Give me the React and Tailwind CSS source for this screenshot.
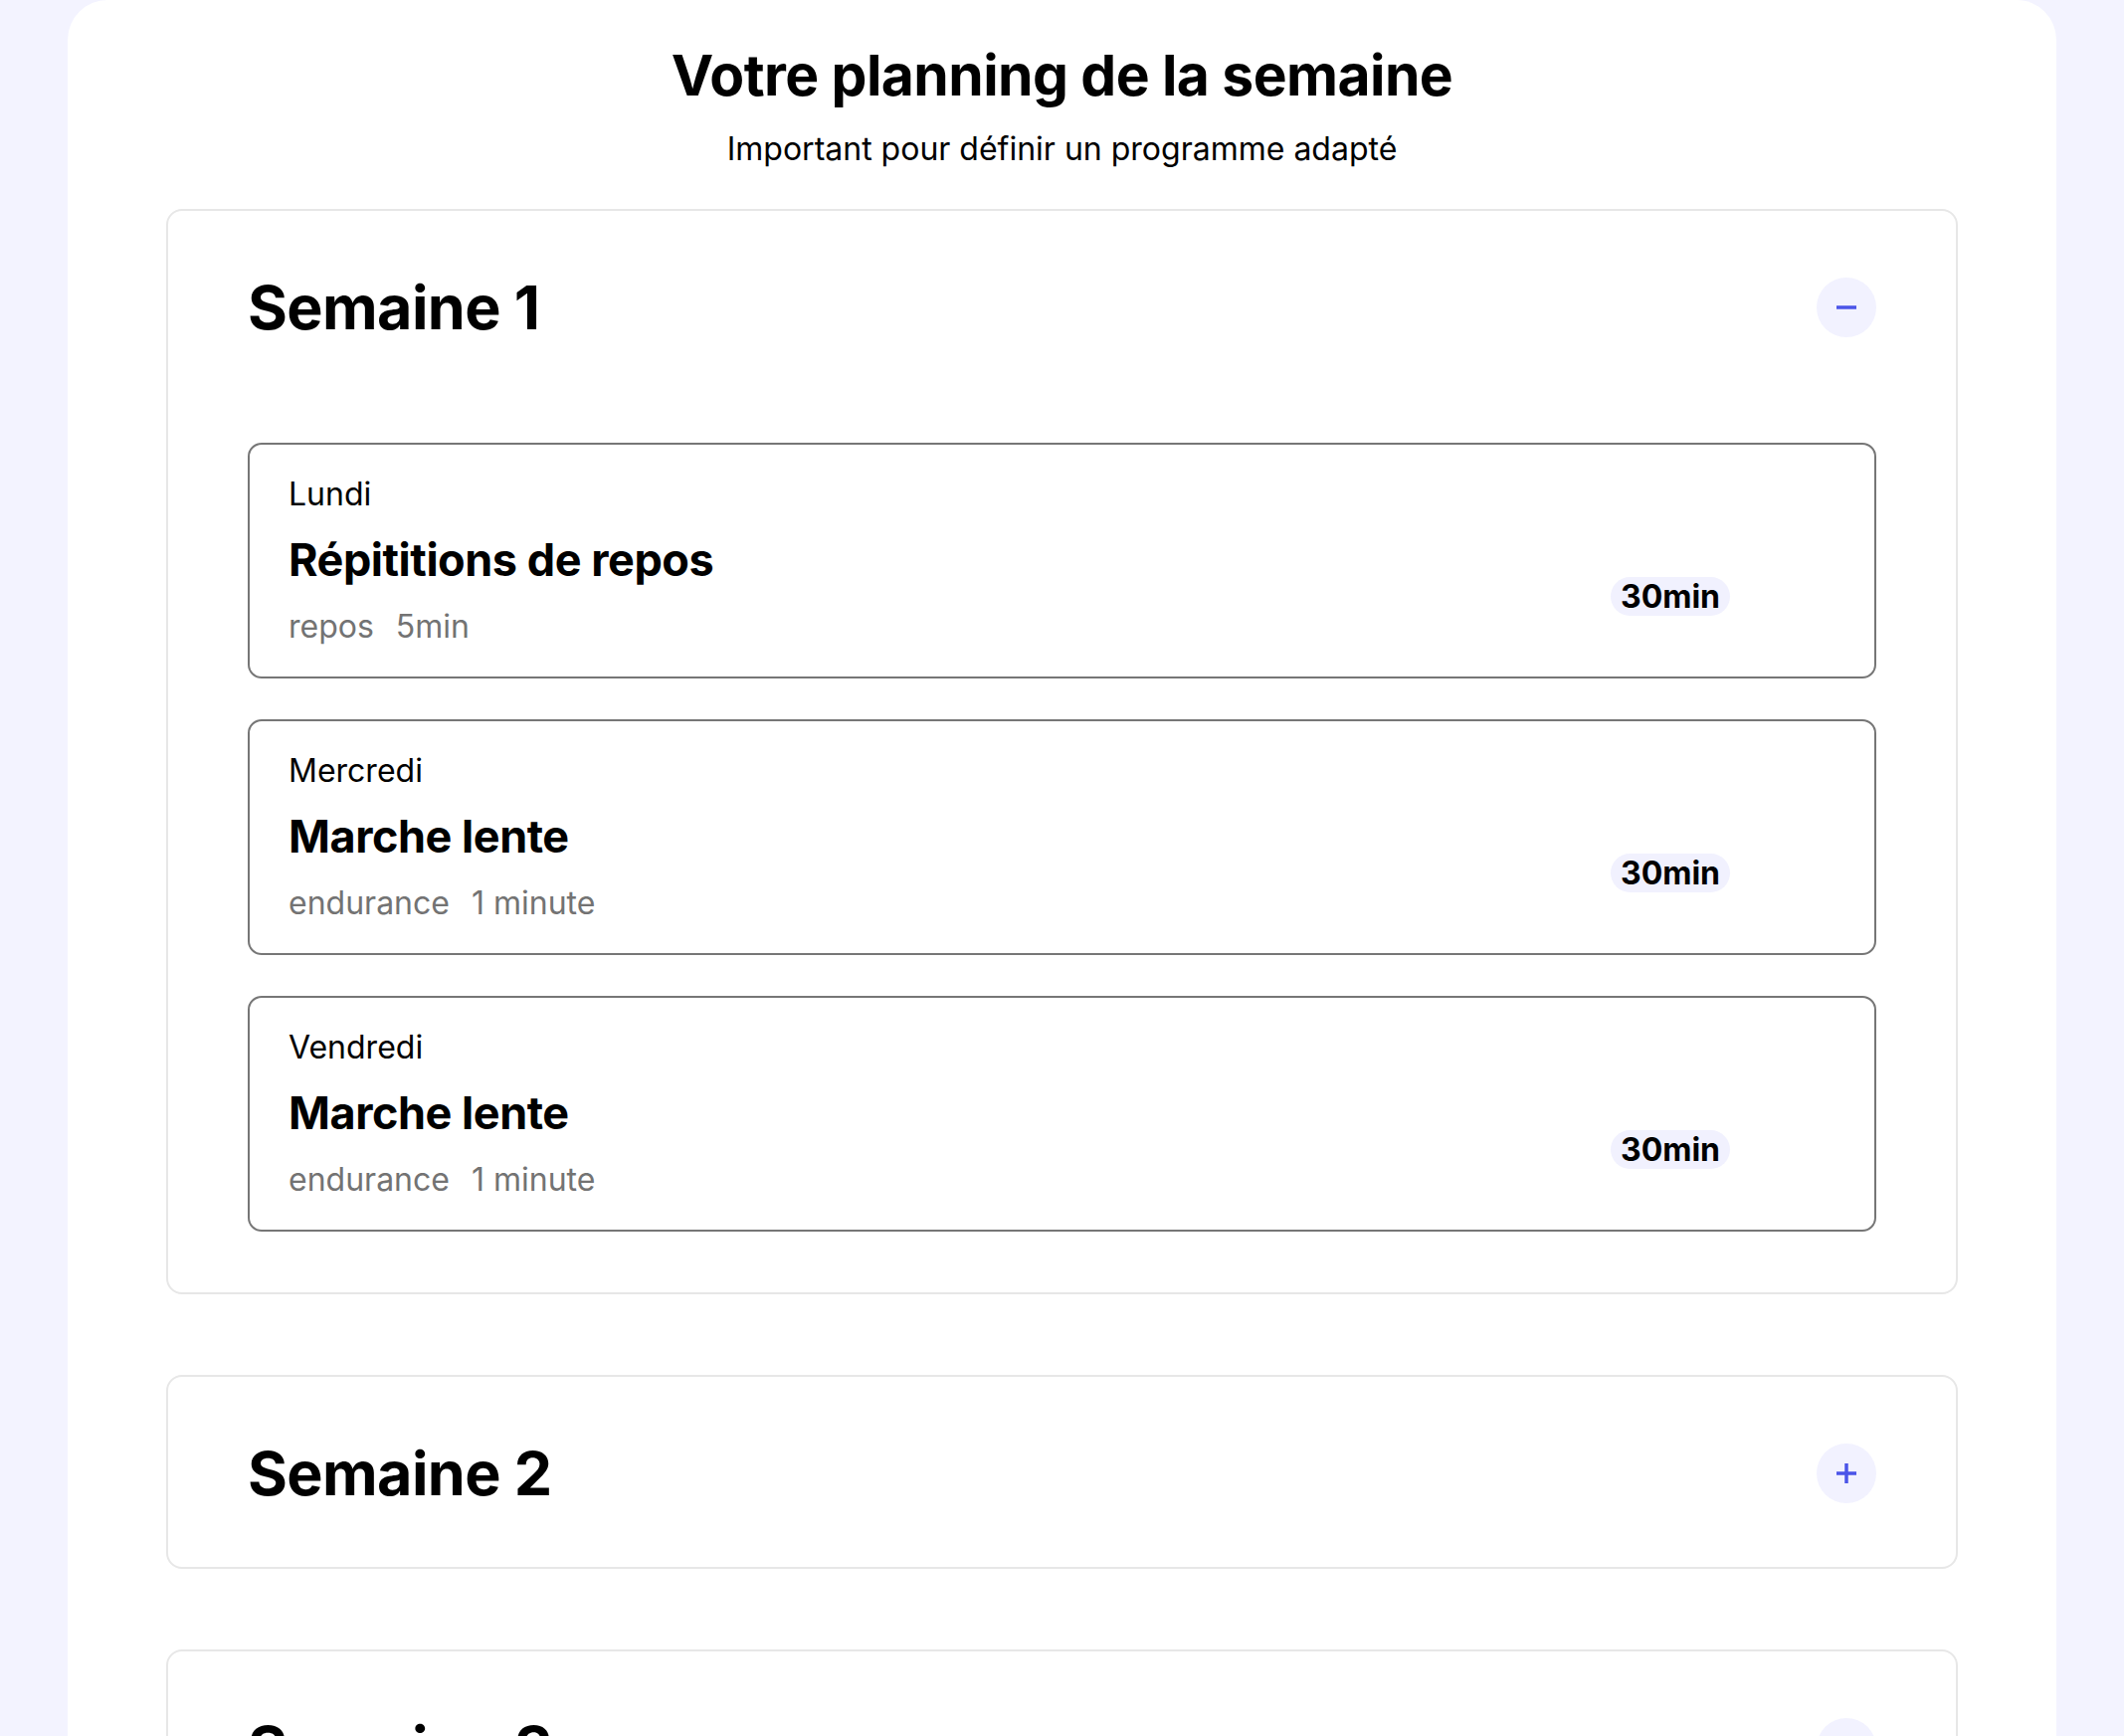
import React, { useState } from "react";

const weeks = [
  {
    title: "Semaine 1",
    days: [
      { day: "Lundi", name: "Répititions de repos", type: "repos", length: "5min", total: "30min" },
      { day: "Mercredi", name: "Marche lente", type: "endurance", length: "1 minute", total: "30min" },
      { day: "Vendredi", name: "Marche lente", type: "endurance", length: "1 minute", total: "30min" },
    ],
  },
  { title: "Semaine 2", days: [] },
  { title: "Semaine 3", days: [] },
];

function ToggleIcon({ open }) {
  return (
    <svg width="22" height="22" viewBox="0 0 22 22" fill="none">
      <line x1="1" y1="11" x2="21" y2="11" stroke="#4b55e8" strokeWidth="3.5" />
      {!open && <line x1="11" y1="1" x2="11" y2="21" stroke="#4b55e8" strokeWidth="3.5" />}
    </svg>
  );
}

function DayCard({ item }) {
  return (
    <div className="flex items-center justify-between h-[237px] border-2 border-[#767676] rounded-[14px] px-[39px]">
      <div className="flex flex-col">
        <p className="text-[32px] leading-[40px] text-black">{item.day}</p>
        <p className="mt-[19px] text-[45px] leading-[54px] font-bold text-black tracking-[-0.01em]">{item.name}</p>
        <p className="mt-[20px] text-[32px] leading-[40px] text-[#737373] flex gap-[22px]">
          <span>{item.type}</span>
          <span>{item.length}</span>
        </p>
      </div>
      <span className="mt-[72px] mr-[106px] h-[39px] px-[10px] flex items-center rounded-full bg-[#f1f1fe] text-[32px] font-bold text-black">
        {item.total}
      </span>
    </div>
  );
}

function WeekPanel({ week, open, onToggle }) {
  return (
    <div className="border-2 border-[#e7e7e7] rounded-[16px] px-[80px] pt-[60px] pb-[57px]">
      <div className="flex items-center justify-between h-[74px]">
        <h2 className="text-[61px] leading-[74px] font-bold text-black tracking-[-0.01em]">{week.title}</h2>
        <button
          onClick={onToggle}
          className="w-[60px] h-[60px] rounded-full bg-[#f2f2ff] flex items-center justify-center"
        >
          <ToggleIcon open={open} />
        </button>
      </div>
      {open && week.days.length > 0 && (
        <div className="mt-[99px] mb-[4px] flex flex-col gap-[41px]">
          {week.days.map((d, i) => (
            <DayCard key={i} item={d} />
          ))}
        </div>
      )}
    </div>
  );
}

export default function App() {
  const [openWeek, setOpenWeek] = useState(0);

  return (
    <div className="min-h-screen bg-[#f3f3ff] px-[68px]" style={{ fontFamily: "Inter, 'Noto Sans', sans-serif" }}>
      <div className="bg-white rounded-t-[40px] px-[99px] pt-[41px] pb-[80px]">
        <h1 className="text-center text-[57px] leading-[70px] font-bold text-black tracking-[-0.01em]">
          Votre planning de la semaine
        </h1>
        <p className="mt-[20px] text-center text-[32px] leading-[38px] text-black">
          Important pour définir un programme adapté
        </p>
        <div className="mt-[41px] flex flex-col gap-[81px]">
          {weeks.map((w, i) => (
            <WeekPanel
              key={i}
              week={w}
              open={openWeek === i}
              onToggle={() => setOpenWeek(openWeek === i ? -1 : i)}
            />
          ))}
        </div>
      </div>
    </div>
  );
}
